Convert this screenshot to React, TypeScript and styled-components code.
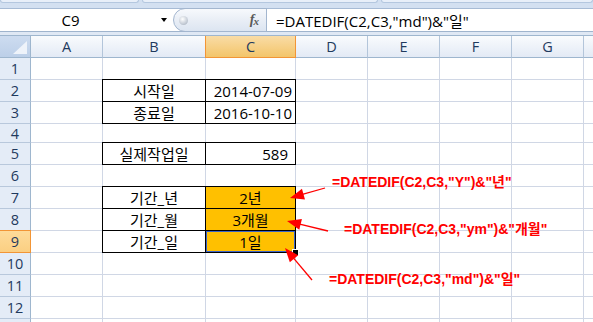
import React from "react";
import styled, { createGlobalStyle, css } from "styled-components";

const Global = createGlobalStyle`
  html, body { margin: 0; padding: 0; background: #fff; }
  body { font-family: "Open Sans", "Noto Sans CJK KR", sans-serif; }
`;

const Page = styled.div`
  position: relative;
  width: 593px;
  height: 322px;
  overflow: hidden;
  background: #fff;
`;

const Ribbon = styled.div`
  height: 8px;
  display: flex;
  gap: 3px;
  background: #d3e0f1;
`;

const RibbonGroup = styled.div<{ $w?: number }>`
  flex: ${(p) => (p.$w ? `0 0 ${p.$w}px` : "1 1 auto")};
  height: 3px;
  box-sizing: border-box;
  background: #e8eff9;
  border: 1px solid #b4c7df;
  border-top: none;
  border-radius: 0 0 3px 3px;
`;

const FormulaBar = styled.div`
  display: flex;
  height: 23px;
  box-sizing: border-box;
  border-top: 1px solid #a7bbd5;
  background: #fff;
`;

const NameBox = styled.div`
  flex: 0 0 173px;
  display: flex;
  align-items: center;
  font: 15px "Open Sans", sans-serif;
  color: #000;
`;

const NameText = styled.span`
  flex: 1;
  text-align: center;
  padding-right: 20px;
`;

const DropArrow = styled.span`
  width: 0;
  height: 0;
  margin-right: 6px;
  border-left: 3.5px solid transparent;
  border-right: 3.5px solid transparent;
  border-top: 4px solid #000;
`;

const FxPill = styled.div`
  flex: 0 0 94px;
  margin: -1px 0 -1px 0;
  box-sizing: border-box;
  border: 1px solid #a3b6cf;
  border-radius: 12px 0 0 12px;
  background: linear-gradient(#f7f9fc, #e9eef6 50%, #dce5f1);
  display: flex;
  align-items: center;
  padding: 0 8px 0 5px;
`;

const Knob = styled.span`
  width: 9px;
  height: 9px;
  border-radius: 50%;
  background: radial-gradient(circle at 40% 35%, #ffffff, #c5ccd6 60%, #9aa4b2);
`;

const FxLabel = styled.span`
  margin-left: auto;
  font: italic bold 14px "Liberation Serif", serif;
  color: #5a5a5a;
  letter-spacing: -1px;
  & sub { font-size: 11px; vertical-align: -1px; }
`;

const FormulaText = styled.div`
  flex: 1;
  display: flex;
  align-items: center;
  padding-left: 9px;
  font: 15px "Open Sans", "Noto Sans CJK KR", sans-serif;
  color: #000;
  white-space: nowrap;
`;

const Splitter = styled.div`
  height: 5px;
  box-sizing: border-box;
  border-top: 1px solid #9fb4cd;
  border-bottom: 1px solid #9eb6ce;
  background: #dfe8f4;
`;

const Row = styled.div<{ $h: number }>`
  display: flex;
  height: ${(p) => p.$h}px;
`;

const Corner = styled.div`
  flex: 0 0 31px;
  box-sizing: border-box;
  border-right: 1px solid #9eb6ce;
  border-bottom: 1px solid #9eb6ce;
  background: linear-gradient(#cddcf0, #bccfe8);
  display: flex;
  align-items: flex-end;
  justify-content: flex-end;
  padding: 0 3px 3px 0;
`;

const headText = css`
  font: 14.5px "Open Sans", sans-serif;
  color: #1f3a5e;
  display: flex;
  align-items: center;
  justify-content: center;
  box-sizing: border-box;
`;

const ColHead = styled.div<{ $w: number; $active?: boolean }>`
  ${headText};
  flex: 0 0 ${(p) => p.$w}px;
  border-right: 1px solid #b3c5da;
  border-bottom: 1px solid #9eb6ce;
  background: linear-gradient(#f9fbfd, #e3eaf5);
  ${(p) =>
    p.$active &&
    css`
      background: linear-gradient(#f9dca6, #f3c56a);
      border-right-color: #f29536;
      border-bottom-color: #f29536;
      box-shadow: -1px 0 0 #f29536;
    `}
`;

const RowHead = styled.div<{ $active?: boolean }>`
  ${headText};
  flex: 0 0 31px;
  border-right: 1px solid #9eb6ce;
  border-bottom: 1px solid #b8c8dc;
  background: #e4ecf7;
  ${(p) =>
    p.$active &&
    css`
      background: linear-gradient(#fedb9a, #fbcf82);
      border-right-color: #f29536;
      border-bottom-color: #f29536;
      box-shadow: 0 -1px 0 #f29536;
    `}
`;

const Cell = styled.div<{
  $w: number;
  $boxed?: boolean;
  $fill?: string;
  $right?: boolean;
  $pr?: number;
  $active?: boolean;
}>`
  flex: 0 0 ${(p) => p.$w}px;
  box-sizing: border-box;
  position: relative;
  border-right: 1px solid #d0d7e5;
  border-bottom: 1px solid #d0d7e5;
  background: ${(p) => p.$fill ?? "#fff"};
  display: flex;
  align-items: center;
  justify-content: ${(p) => (p.$right ? "flex-end" : "center")};
  padding-right: ${(p) => p.$pr ?? 0}px;
  font: 15px "Open Sans", "Noto Sans CJK KR", sans-serif;
  color: #000;
  white-space: nowrap;
  ${(p) =>
    p.$boxed &&
    css`
      &::before {
        content: "";
        position: absolute;
        top: -1px;
        left: -1px;
        right: -1px;
        bottom: -1px;
        border: 1px solid #000;
        pointer-events: none;
      }
    `}
  ${(p) =>
    p.$active &&
    css`
      &::before {
        box-shadow: inset 0 0 0 1px #3c64c8;
        z-index: 2;
      }
      &::after {
        content: "";
        position: absolute;
        right: -3px;
        bottom: -3px;
        width: 5px;
        height: 5px;
        background: #000;
        outline: 1px solid #fff;
        z-index: 3;
      }
    `}
`;

const Note = styled.div<{ $x: number; $y: number }>`
  position: absolute;
  left: ${(p) => p.$x}px;
  top: ${(p) => p.$y}px;
  font: bold 14px/16px "Liberation Sans", "Noto Sans CJK KR", sans-serif;
  color: #ff0000;
  white-space: nowrap;
  z-index: 5;
`;

const ArrowLayer = styled.svg`
  position: absolute;
  left: 0;
  top: 0;
  z-index: 5;
  pointer-events: none;
`;

const COLS = [72, 103, 90, 72, 72, 72, 72, 72];
const LETTERS = ["A", "B", "C", "D", "E", "F", "G", ""];

type RowData = {
  n: number;
  label?: string;
  h?: number;
  b?: string;
  c?: string;
  right?: boolean;
  pr?: number;
  fill?: boolean;
};

const ROWS: RowData[] = [
  { n: 1 },
  { n: 2, b: "시작일", c: "2014-07-09", right: true, pr: 3 },
  { n: 3, b: "종료일", c: "2016-10-10", right: true, pr: 3 },
  { n: 4, h: 19 },
  { n: 5, b: "실제작업일", c: "589", right: true, pr: 7 },
  { n: 6 },
  { n: 7, b: "기간_년", c: "2년", fill: true },
  { n: 8, b: "기간_월", c: "3개월", fill: true },
  { n: 9, b: "기간_일", c: "1일", fill: true },
  { n: 10 },
  { n: 11 },
  { n: 12 },
  { n: 13, label: "" },
];

function Arrow({ x1, y1, x2, y2 }: { x1: number; y1: number; x2: number; y2: number }) {
  const dx = x2 - x1;
  const dy = y2 - y1;
  const len = Math.hypot(dx, dy);
  const ux = dx / len;
  const uy = dy / len;
  const L = 14;
  const W = 5.5;
  const bx = x2 - ux * L;
  const by = y2 - uy * L;
  const px = -uy;
  const py = ux;
  return (
    <g>
      <line x1={x1} y1={y1} x2={bx + ux * 2} y2={by + uy * 2} stroke="#ff0000" strokeWidth={1.3} />
      <polygon
        points={`${x2},${y2} ${bx + px * W},${by + py * W} ${bx - px * W},${by - py * W}`}
        fill="#ff0000"
      />
    </g>
  );
}

export default function App() {
  return (
    <Page>
      <Global />
      <Ribbon>
        <RibbonGroup $w={139} />
        <RibbonGroup $w={236} />
        <RibbonGroup />
      </Ribbon>
      <FormulaBar>
        <NameBox>
          <NameText>C9</NameText>
          <DropArrow />
        </NameBox>
        <FxPill>
          <Knob />
          <FxLabel>
            f<sub>x</sub>
          </FxLabel>
        </FxPill>
        <FormulaText>=DATEDIF(C2,C3,"md")&amp;"일"</FormulaText>
      </FormulaBar>
      <Splitter />
      <Row $h={22}>
        <Corner>
          <svg width="14" height="13" viewBox="0 0 14 13">
            <polygon points="14,0 14,13 0,13" fill="#eef3fa" />
          </svg>
        </Corner>
        {COLS.map((w, i) => (
          <ColHead key={i} $w={w} $active={i === 2}>
            {LETTERS[i]}
          </ColHead>
        ))}
      </Row>
      {ROWS.map((r) => {
        const boxed = !!r.b;
        return (
          <Row key={r.n} $h={r.h ?? 22}>
            <RowHead $active={r.n === 9}>{r.label ?? r.n}</RowHead>
            <Cell $w={COLS[0]} />
            <Cell $w={COLS[1]} $boxed={boxed}>
              {r.b}
            </Cell>
            <Cell
              $w={COLS[2]}
              $boxed={boxed}
              $right={r.right}
              $pr={r.pr}
              $fill={r.fill ? "#ffc000" : undefined}
              $active={r.n === 9}
            >
              {r.c}
            </Cell>
            {COLS.slice(3).map((w, i) => (
              <Cell key={i} $w={w} />
            ))}
          </Row>
        );
      })}
      <Note $x={332} $y={174}>=DATEDIF(C2,C3,"Y")&amp;"년"</Note>
      <Note $x={344} $y={221}>=DATEDIF(C2,C3,"ym")&amp;"개월"</Note>
      <Note $x={329} $y={271}>=DATEDIF(C2,C3,"md")&amp;"일"</Note>
      <ArrowLayer width={593} height={322}>
        <Arrow x1={325} y1={188} x2={290} y2={198} />
        <Arrow x1={328} y1={231} x2={287} y2={221} />
        <Arrow x1={312} y1={280} x2={285} y2={248} />
      </ArrowLayer>
    </Page>
  );
}
